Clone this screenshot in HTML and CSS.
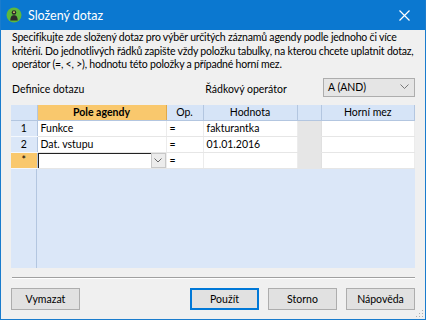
FILE: index.html
```html
<!DOCTYPE html>
<html>
  <head>
    <title>Složený dotaz</title>
    <link rel="stylesheet" href="styles.css">
  </head>

  <body>
    <div class="window">
      <div class="titlebar">
        <svg class="app-icon" width="16" height="16" viewBox="0 0 16 16">
          <circle cx="8" cy="8" r="7.5" fill="#5fb83c" />
          <circle cx="8" cy="5.5" r="2.3" fill="#2b2b2b" />
          <path d="M4.3 13.5 C4.5 9.5 5.8 8.3 8 8.3 C10.2 8.3 11.5 9.5 11.7 13.5 Z" fill="#2b2b2b" />
          <circle cx="8" cy="5.2" r="0.9" fill="#e8d36a" />
        </svg>
        <span class="title">Složený dotaz</span>
        <svg class="close" width="11" height="11" viewBox="0 0 11 11">
          <path d="M0.5 0.5 L10.5 10.5 M10.5 0.5 L0.5 10.5" stroke="#fff" stroke-width="1.2" />
        </svg>
      </div>

      <div class="content">
        <p class="intro">
          Specifikujte zde složený dotaz pro výběr určitých záznamů agendy podle jednoho či více<br>
          kritérií. Do jednotlivých řádků zapište vždy položku tabulky, na kterou chcete uplatnit dotaz,<br>
          operátor (=, &lt;, &gt;), hodnotu této položky a případné horní mez.
        </p>

        <div class="query-row">
          <span class="label">Definice dotazu</span>
          <span class="label op-label">Řádkový operátor</span>
          <div class="combo">
            <span>A (AND)</span>
            <svg width="9" height="6" viewBox="0 0 9 6">
              <path d="M0.5 0.5 L4.5 4.5 L8.5 0.5" fill="none" stroke="#777" stroke-width="1" />
            </svg>
          </div>
        </div>

        <div class="grid">
          <table>
            <colgroup>
              <col class="c-num" />
              <col class="c-field" />
              <col class="c-op" />
              <col class="c-value" />
              <col class="c-blank" />
              <col class="c-max" />
            </colgroup>
            <thead>
              <tr>
                <th class="corner"></th>
                <th class="active">Pole agendy</th>
                <th>Op.</th>
                <th>Hodnota</th>
                <th></th>
                <th>Horní mez</th>
              </tr>
            </thead>
            <tbody>
              <tr>
                <td class="num">1</td>
                <td>Funkce</td>
                <td>=</td>
                <td>fakturantka</td>
                <td class="blank"></td>
                <td></td>
              </tr>
              <tr>
                <td class="num">2</td>
                <td>Dat. vstupu</td>
                <td>=</td>
                <td>01.01.2016</td>
                <td class="blank"></td>
                <td></td>
              </tr>
              <tr>
                <td class="num current">*</td>
                <td class="editor">
                  <div class="cell-combo">
                    <span class="cell-input"></span>
                    <span class="cell-btn">
                      <svg width="8" height="5" viewBox="0 0 8 5">
                        <path d="M0.5 0.5 L4 4 L7.5 0.5" fill="none" stroke="#666" stroke-width="1" />
                      </svg>
                    </span>
                  </div>
                </td>
                <td>=</td>
                <td></td>
                <td class="blank"></td>
                <td></td>
              </tr>
            </tbody>
          </table>
        </div>

        <div class="separator"></div>

        <div class="buttons">
          <button>Vymazat</button>
          <div class="spacer"></div>
          <button class="default">Použít</button>
          <button>Storno</button>
          <button>Nápověda</button>
        </div>
      </div>
      <div class="grip"></div>
    </div>
  </body>
</html>
```

FILE: styles.css
```css
body {
  margin: 0;
  font-family: "Lato", "Noto Sans", sans-serif;
  font-size: 10.5px;
  font-weight: 400;
  color: #000;
}

.window {
  position: relative;
  width: 426px;
  height: 320px;
  box-sizing: border-box;
  border: 1px solid #1a7ccd;
  border-top: 0;
  background: #f0f0f0;
  overflow: hidden;
}

.titlebar {
  height: 30px;
  background: #0b78d0;
  display: flex;
  align-items: center;
  padding: 0 0 0 5px;
  color: #fff;
}

.app-icon {
  margin-right: 6px;
}

.title {
  font-size: 12.5px;
  flex: 1;
}

.close {
  margin-right: 15px;
}

.content {
  padding: 1px 10px 0 10px;
}

.intro {
  margin: 0;
  line-height: 13.5px;
  padding-left: 1px;
  letter-spacing: -0.2px;
  white-space: nowrap;
}

.query-row {
  display: flex;
  align-items: center;
  margin-top: 6px;
  height: 19px;
}

.query-row .label {
  padding-left: 1px;
  margin-top: 3px;
}

.op-label {
  margin-left: 120px;
}

.combo {
  margin-left: auto;
  width: 92px;
  height: 19px;
  box-sizing: border-box;
  border: 1px solid #adadad;
  background: #e5e5e5;
  display: flex;
  align-items: center;
  justify-content: space-between;
  padding: 0 5px 0 4px;
}

/* grid */
.grid {
  margin-top: 8px;
  height: 163px;
  background:
    linear-gradient(to right, transparent 25px, #b3c6e0 25px, #b3c6e0 26px, transparent 26px),
    #dbe7f8;
}

table {
  border-collapse: collapse;
  table-layout: fixed;
  width: 100%;
}

.c-num { width: 26px; }
.c-field { width: 129px; }
.c-op { width: 37px; }
.c-value { width: 94px; }
.c-blank { width: 24px; }
.c-max { width: auto; }

th {
  height: 15px;
  padding: 0;
  font-weight: 400;
  background: #d6e4f7;
  border-right: 1px solid #b3c6e0;
  border-bottom: 1px solid #b3c6e0;
  text-align: center;
}

th.active {
  background: #f9c86d;
  font-weight: 700;
  border-right-color: #e0a94a;
}

td {
  height: 15px;
  padding: 0 0 0 3px;
  background: #fff;
  border-right: 1px solid #ececec;
  border-bottom: 1px solid #e6e6e6;
  white-space: nowrap;
}

td.num {
  background: #dbe7f8;
  text-align: center;
  padding: 0;
  border-right: 1px solid #b3c6e0;
  border-bottom: 1px solid #f4f8fd;
}

td.num.current {
  background: #f9c86d;
}

td.blank {
  background: #e6e6e6;
  border-right-color: #e0e0e0;
}

td.editor {
  padding: 0;
}

.cell-combo {
  display: flex;
  height: 15px;
}

.cell-input {
  flex: 1;
  border-top: 1px solid #222;
  border-left: 1px solid #222;
  background: #fff;
}

.cell-btn {
  width: 15px;
  box-sizing: border-box;
  border: 1px solid #c8c8c8;
  background: #ececec;
  display: flex;
  align-items: center;
  justify-content: center;
}

.separator {
  margin-top: 9px;
  margin-left: 1px;
  height: 1px;
  background: #a0a0a0;
  border-bottom: 1px solid #fff;
}

.buttons {
  display: flex;
  gap: 9px;
  margin-top: 9px;
}

.spacer {
  flex: 1;
}

button {
  width: 69px;
  height: 22px;
  border: 1px solid #adadad;
  background: #e1e1e1;
  font-family: "Lato", "Noto Sans", sans-serif;
  font-size: 10.5px;
  font-weight: 400;
  color: #000;
  padding: 0;
}

button.default {
  border: 2px solid #0078d7;
}

.grip {
  position: absolute;
  right: 2px;
  bottom: 2px;
  width: 8px;
  height: 8px;
  background:
    radial-gradient(circle, #b0b0b0 0.8px, transparent 1px) 0 0 / 3px 3px;
  clip-path: polygon(100% 0, 100% 100%, 0 100%);
}
```
